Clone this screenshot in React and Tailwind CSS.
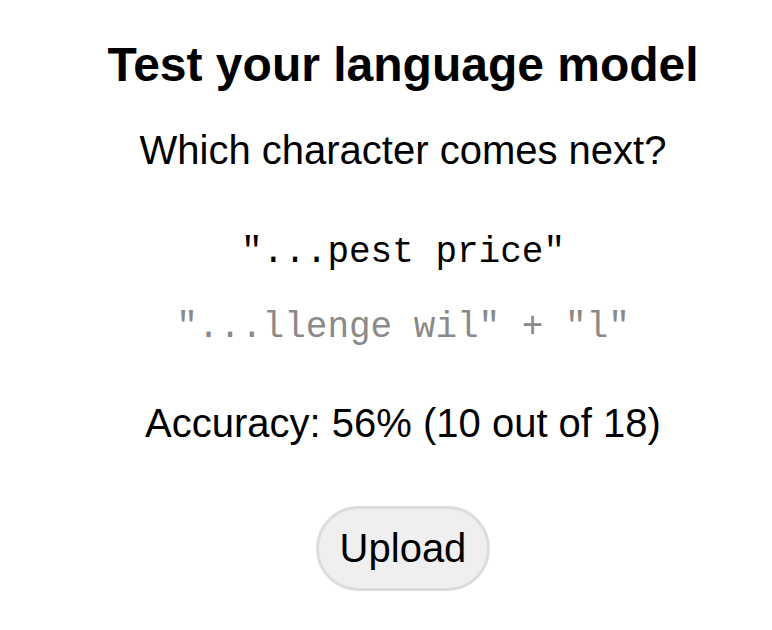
export default function App() {
  return (
    <div className="flex min-h-screen flex-col items-center bg-white pl-[34px] text-black font-['Liberation_Sans',Arial,sans-serif]">
      <h1 className="mt-[36px] text-[48px] font-bold leading-[58px]">Test your language model</h1>
      <p className="mt-[33px] text-[40px] leading-[46px]">Which character comes next?</p>
      <div className="mt-[58px] font-['Liberation_Mono','Courier_New',monospace] text-[36px] leading-[44px]">
        "...pest price"
      </div>
      <div className="mt-[31px] font-['Liberation_Mono','Courier_New',monospace] text-[36px] leading-[44px] text-[#8a8a8a]">
        "...llenge wil" + "l"
      </div>
      <p className="mt-[50px] text-[40px] leading-[46px]">Accuracy: 56% (10 out of 18)</p>
      <button className="mt-[60px] rounded-full border-[3px] border-[#dcdcdc] bg-[#efefef] px-[21px] py-[15px] text-[40px] leading-[49px]">
        Upload
      </button>
    </div>
  );
}
